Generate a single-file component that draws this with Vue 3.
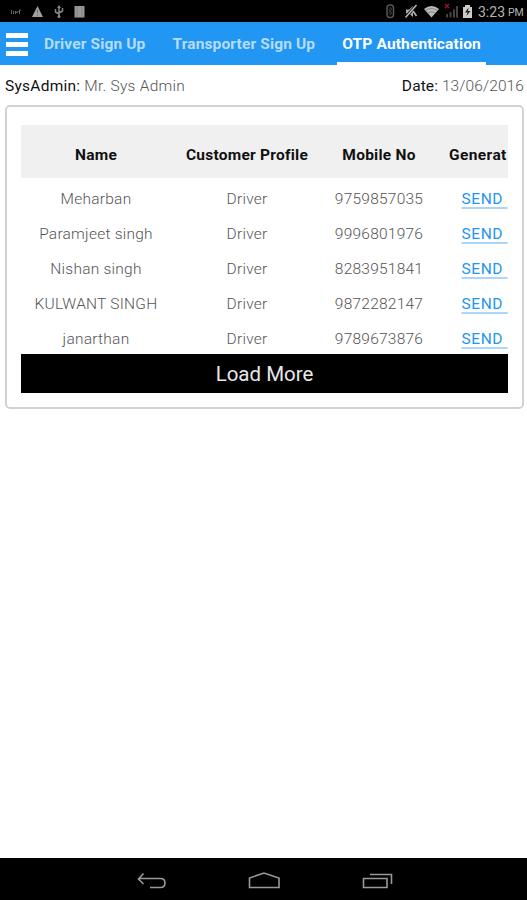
<template>
  <div class="screen">
    <div class="status-bar">
      <svg class="status-icons" width="90" height="22" viewBox="0 0 90 22">
        <path d="M11.500 10v4M13.500 11v3M15.500 14v-3l1.500 2 1.500-2M19.500 14v-4h1.500" stroke="#666" fill="none" />
        <path d="M37.500 6L43 17H32z" fill="#a0a0a0" />
        <path d="M37.500 10v3M37.500 14.500v1" stroke="#666" />
        <path d="M59 7v10M55.500 9v3l3.500 2M62.500 8v3L59 13" stroke="#888" stroke-width="1.500" fill="none" />
        <path d="M59 5l2 3h-4z" fill="#888" />
        <circle cx="59" cy="16.500" r="1.500" fill="#888" />
        <path d="M74.500 6h10v11.500h-10z" fill="#999" />
        <path d="M77 6v11.500M82 6v11.500" stroke="#808080" />
      </svg>
      <div class="status-right">
        <svg width="94" height="22" viewBox="382 0 94 22">
          <rect x="387" y="5" width="6.500" height="12.500" rx="3" fill="none" stroke="#555" stroke-width="1.500" />
          <path d="M388.500 9l3.500 4-2 2V7l2 2-3.500 4" stroke="#444" fill="none" stroke-width=".8" />
          <path d="M406 9.500h3l4-3.500v11l-4-3.500h-3z" fill="#aaa" />
          <path d="M405.500 17.500L416.500 5" stroke="#000" stroke-width="3" />
          <path d="M405.500 17.500L416.500 5M413 11l3.500 5" stroke="#bbb" stroke-width="1.500" />
          <path d="M424 9q7.500-6 15 0L431.500 17.500z" fill="#bbb" />
          <path d="M425.500 10.500q6-4 12 0M427.500 13q4-2.500 8 0" stroke="#777" fill="none" stroke-width=".8" />
          <path d="M447 17.500V14M450.500 17.500V12M454 17.500V9.500M457 17.500V6" stroke="#444" stroke-width="2" />
          <path d="M445 4l4 4M449 4l-4 4" stroke="#a3121f" stroke-width="1.300" />
          <path d="M463 7h2V5h5v2h2v11h-9z" fill="#ccc" />
          <path d="M468.500 7.500l-3.500 5h2.500l-1 3.500 4-5h-2.500z" fill="#222" />
        </svg>
        <span class="clock">3:23</span>
        <span class="meridiem">PM</span>
      </div>
    </div>

    <div class="tab-bar">
      <div class="menu">
        <span></span>
        <span></span>
        <span></span>
      </div>
      <div
        v-for="tab in tabs"
        :key="tab"
        class="tab"
        :class="{ active: tab === activeTab }"
        @click="activeTab = tab"
      >
        {{ tab }}
      </div>
    </div>

    <div class="info">
      <p class="user"><b>SysAdmin:</b> Mr. Sys Admin</p>
      <p class="date"><b>Date:</b> 13/06/2016</p>
    </div>

    <div class="card">
      <div class="table-wrap">
        <div class="row head">
          <div>Name</div>
          <div>Customer Profile</div>
          <div>Mobile No</div>
          <div class="generate">Generat</div>
        </div>
        <div v-for="user in users" :key="user.mobile" class="row">
          <div>{{ user.name }}</div>
          <div>Driver</div>
          <div>{{ user.mobile }}</div>
          <div class="action"><a class="send">SEND&nbsp;</a></div>
        </div>
      </div>
      <button class="load-more">Load More</button>
    </div>

    <div class="nav-bar">
      <svg width="30" height="20" viewBox="137 871 30 20">
        <path d="M143.500 873.500l-5 5.500 5 5M139 878.500h21.500q4.500 0 4.500 4.500t-4.500 4.500H150" />
      </svg>
      <svg width="34" height="20" viewBox="248 871 34 20">
        <path d="M249.500 887.500v-9.500l14.500-5 15 5v9.500z" />
      </svg>
      <svg width="32" height="20" viewBox="362 871 32 20">
        <path d="M363.500 878.500h23.500v9h-23.500zM370 874.500h21.500V884" />
      </svg>
    </div>
  </div>
</template>

<script setup>
import { ref } from 'vue';

const tabs = ['Driver Sign Up', 'Transporter Sign Up', 'OTP Authentication'];
const activeTab = ref('OTP Authentication');

const users = [
  { name: 'Meharban', mobile: '9759857035' },
  { name: 'Paramjeet singh', mobile: '9996801976' },
  { name: 'Nishan singh', mobile: '8283951841' },
  { name: 'KULWANT SINGH', mobile: '9872282147' },
  { name: 'janarthan', mobile: '9789673876' },
];
</script>

<style>
body {
  margin: 0;
  background: #fff;
}
</style>

<style scoped>
.screen {
  display: flex;
  flex-direction: column;
  height: 900px;
  width: 527px;
  overflow: hidden;
  font-family: Roboto, 'Liberation Sans', sans-serif;
  font-size: 15.5px;
  color: #555;
}
.status-bar {
  display: flex;
  justify-content: space-between;
  height: 22px;
  background: #000;
}
.status-right {
  display: flex;
  align-items: center;
  width: 145px;
  color: #b5b5b5;
  line-height: 22px;
}
.status-right svg {
  flex: none;
}
.clock {
  margin: 1px 0 0 2px;
  font-size: 14px;
}
.meridiem {
  margin: 3px 0 0 3px;
  font-size: 10.5px;
}
.tab-bar {
  display: flex;
  height: 43px;
  background: #2196f3;
}
.menu {
  display: flex;
  flex-direction: column;
  gap: 4px;
  width: 22px;
  margin: 11px 11px 0 6px;
}
.menu span {
  height: 5px;
  background: #fff;
}
.tab {
  box-sizing: border-box;
  height: 43px;
  padding: 0 5.5px 0 5px;
  margin-right: 16.5px;
  line-height: 44px;
  font-weight: 700;
  letter-spacing: 0.14px;
  color: #b5dcfb;
  white-space: nowrap;
  cursor: pointer;
}
.tab.active {
  color: #fff;
  border-bottom: 3px solid #fff;
}
.info {
  display: flex;
  justify-content: space-between;
  height: 40px;
  padding: 0 3px 0 5px;
  line-height: 43px;
  font-weight: 300;
  letter-spacing: 0.25px;
}
.info p {
  margin: 0;
}
.info .date {
  letter-spacing: 0.1px;
}
.info b {
  font-weight: 400;
  color: #111;
}
.card {
  box-sizing: border-box;
  height: 304px;
  margin: 0 3px 0 5px;
  padding: 18px 14px 0;
  border: 2px solid #d2d2d2;
  border-radius: 5px;
}
.table-wrap {
  height: 229px;
  overflow: hidden;
}
.row {
  display: grid;
  grid-template-columns: 150px 152px 112px 73px;
  height: 35px;
  line-height: 35px;
  font-weight: 300;
  letter-spacing: 0.24px;
  text-align: center;
  white-space: nowrap;
}
.row.head {
  height: 53px;
  margin-bottom: 4px;
  line-height: 61px;
  font-weight: 700;
  color: #111;
  background: #f0f0f0;
}
.generate,
.action {
  text-align: left;
}
.generate {
  padding-left: 14px;
  letter-spacing: 0.4px;
}
.action {
  padding-left: 26.5px;
}
.send {
  color: #2196f3;
  font-weight: 400;
  letter-spacing: 0.6px;
  text-decoration: underline 2px #a9d6fa;
  text-underline-offset: 3px;
}
.load-more {
  display: block;
  width: 100%;
  height: 39px;
  padding: 1px 0 0;
  border: 0;
  background: #000;
  color: #e8e8e8;
  font-family: inherit;
  font-size: 20.5px;
}
.nav-bar {
  display: flex;
  justify-content: space-between;
  box-sizing: border-box;
  height: 42px;
  margin-top: auto;
  padding: 13px 133px 0 137px;
  background: #000;
}
.nav-bar path {
  fill: none;
  stroke: #999;
  stroke-width: 1.6;
}
</style>
